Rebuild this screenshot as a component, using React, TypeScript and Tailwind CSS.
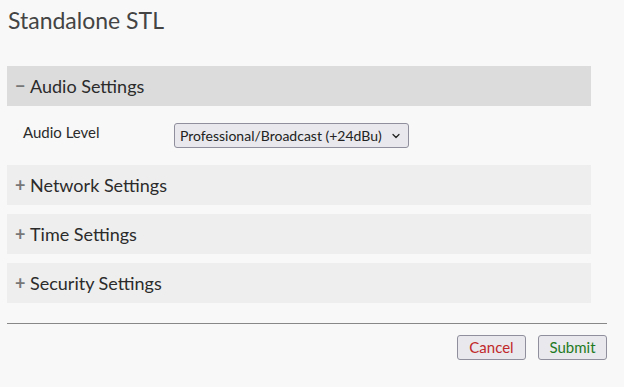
import { ChevronDown } from "lucide-react";

const sections = ["Network Settings", "Time Settings", "Security Settings"];

export default function App() {
  return (
    <main className="min-h-screen bg-[#f8f8f8] text-[#2b2b2b] px-[7px] pt-[4px] font-['Lato',sans-serif]">
      <h1 className="text-[23px] leading-[32px] pl-[1px] text-[#444]">Standalone STL</h1>

      <div className="mt-[30px] w-[584px] flex flex-col gap-[9px]">
        <div>
          <div className="h-[40px] bg-[#dcdcdc] flex items-center pl-[8px] text-[18px]">
            <span className="text-[#777] w-[15px] font-bold">−</span>
            <span>Audio Settings</span>
          </div>
          <div className="flex items-start h-[50px] pt-[17px] pl-[16px] text-[15px]">
            <span className="w-[151px] leading-[20px] -mt-[1px]">Audio Level</span>
            <div className="h-[25px] w-[235px] border border-[#8f8f9d] rounded-[3px] bg-[#e9e9ed] flex items-center justify-between pl-[5px] pr-[6px] text-[14px] text-[#222]">
              <span>Professional/Broadcast (+24dBu)</span>
              <ChevronDown size={12} strokeWidth={2.5} />
            </div>
          </div>
        </div>
        {sections.map((s) => (
          <div key={s} className="h-[40px] bg-[#eeeeee] flex items-center pl-[8px] text-[18px]">
            <span className="text-[#777] w-[15px] font-bold">+</span>
            <span>{s}</span>
          </div>
        ))}
      </div>

      <hr className="mt-[20px] w-[600px] border-0 border-t border-[#888]" />

      <div className="w-[600px] flex justify-end gap-[12px] mt-[11px]">
        <button className="h-[25px] w-[69px] border border-[#8f8f9d] rounded-[3px] bg-[#e9e9ed] text-[15px] text-[#c0282a]">
          Cancel
        </button>
        <button className="h-[25px] w-[69px] border border-[#8f8f9d] rounded-[3px] bg-[#e9e9ed] text-[15px] text-[#1f7a1f]">
          Submit
        </button>
      </div>
    </main>
  );
}
